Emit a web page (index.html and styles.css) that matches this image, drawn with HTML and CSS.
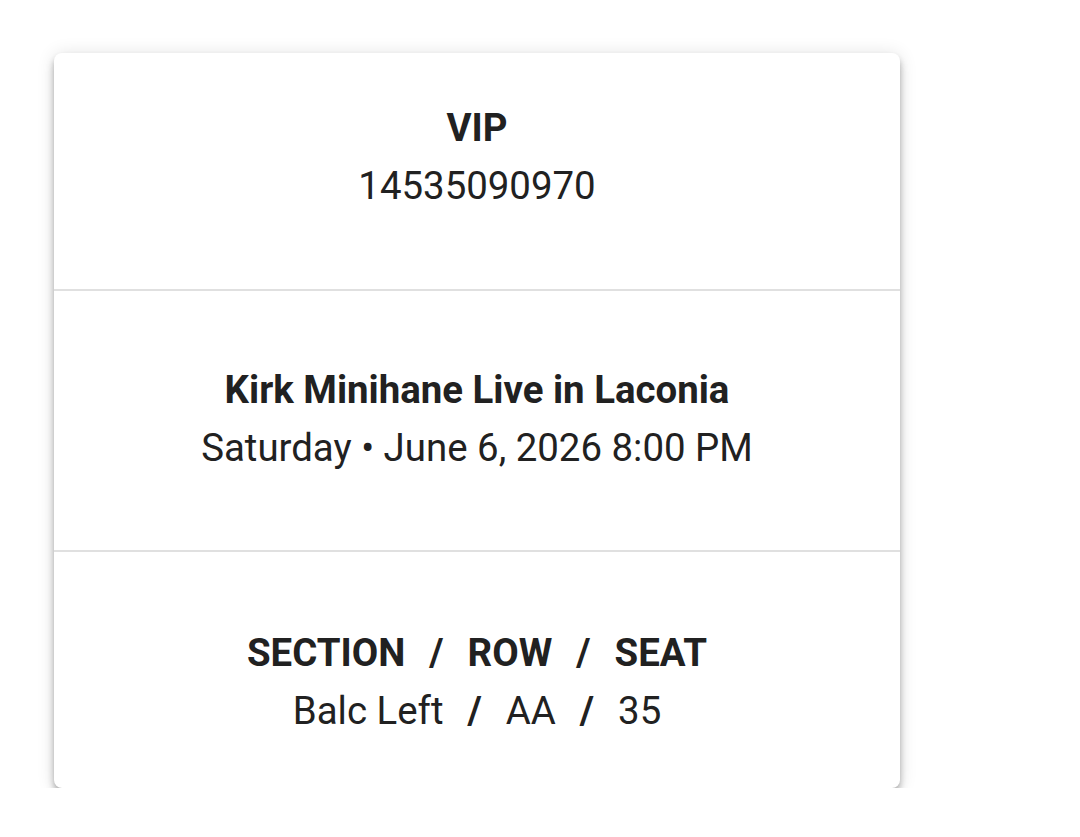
FILE: index.html
```html
<!DOCTYPE html>
<html lang="en">
<head>
<meta charset="utf-8">
<title>Ticket</title>
<link rel="stylesheet" href="styles.css">
</head>
<body>
<div class="card">
  <div class="section section-top">
    <div class="label">VIP</div>
    <div class="value">14535090970</div>
  </div>
  <div class="section section-mid">
    <div class="label">Kirk Minihane Live in Laconia</div>
    <div class="value">Saturday • June 6, 2026 8:00 PM</div>
  </div>
  <div class="section section-bottom">
    <div class="label">SECTION<span class="slash">/</span>ROW<span class="slash">/</span>SEAT</div>
    <div class="value">Balc Left<span class="slash">/</span>AA<span class="slash">/</span>35</div>
  </div>
</div>
</body>
</html>
```
FILE: styles.css
```css
html, body {
  margin: 0;
  padding: 0;
  background: #ffffff;
}
body {
  padding: 53px 0 0 54px;
  font-family: Roboto, "Liberation Sans", sans-serif;
  color: #212121;
}
.card {
  width: 846px;
  background: #ffffff;
  border-radius: 8px;
  box-shadow: 0 4px 6px -1px rgba(0,0,0,.24), 0 7px 10px 0 rgba(0,0,0,.14), 0 1px 18px 0 rgba(0,0,0,.12);
  display: flex;
  flex-direction: column;
}
.section {
  text-align: center;
  font-size: 38.4px;
  line-height: 58px;
}
.section + .section {
  border-top: 2px solid #e0e0e0;
}
.section-top {
  padding: 46px 0 74px;
}
.section-mid {
  padding: 70px 0 73px;
}
.section-bottom {
  padding: 72px 0 48px;
}
.label {
  font-weight: 700;
}
.value {
  font-weight: 400;
}
.slash {
  font-weight: 700;
  display: inline-block;
  padding: 0 24px;
}
```
